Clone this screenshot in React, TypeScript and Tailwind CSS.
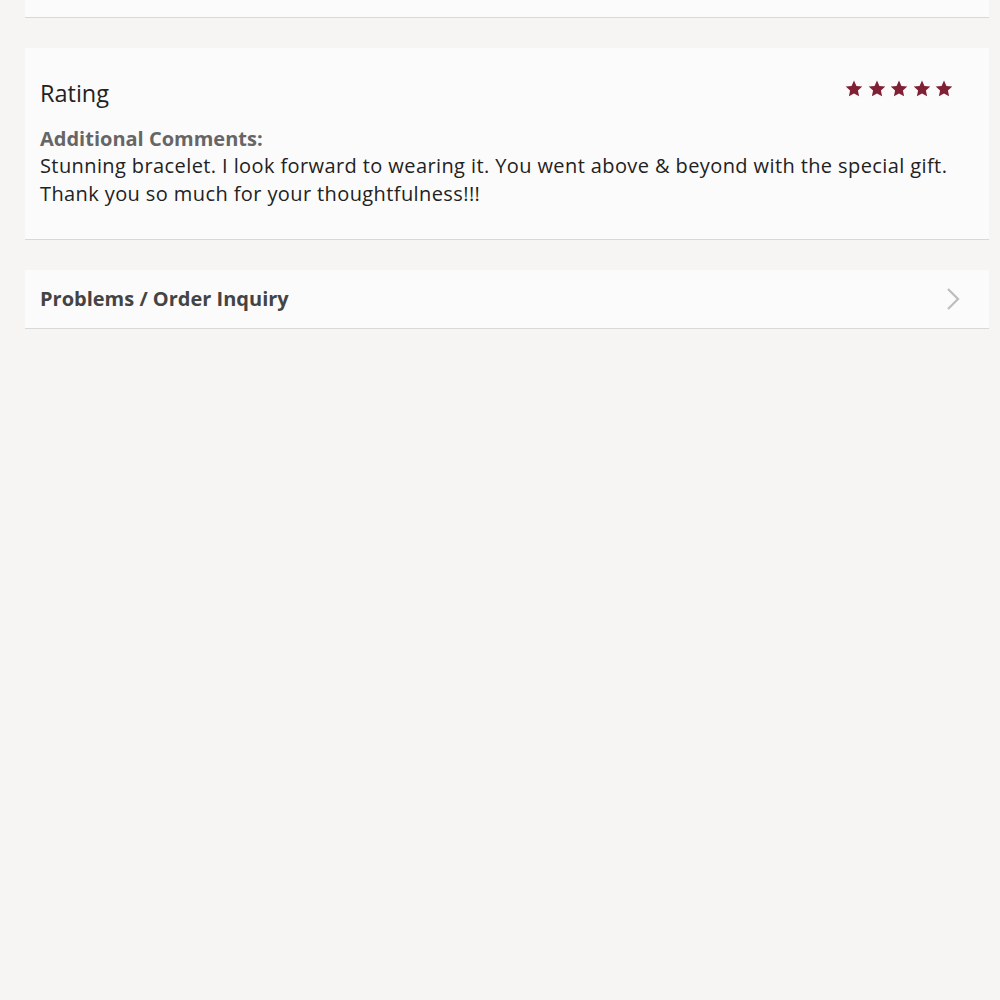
import React from "react";

const Star = () => (
  <svg width="18" height="17" viewBox="0 0 24 23" className="block">
    <path
      d="M12 0.8l3.3 7.2 7.9 0.9-5.9 5.4 1.6 7.8L12 18.2l-6.9 3.9 1.6-7.8L0.8 8.9l7.9-0.9z"
      fill="#7f2035"
    />
  </svg>
);

export default function App() {
  return (
    <div
      className="min-h-[1000px] w-[1000px] bg-[#f6f5f3] pl-[25px] pr-[11px]"
      style={{ fontFamily: "'Open Sans', Lato, sans-serif" }}
    >
      <div className="h-[18px] bg-[#fcfbfb] border-b border-[#d8d8d8]" />
      <div className="mt-[30px] bg-[#fcfbfb] border-b border-[#d8d8d8] px-[15px] pt-[30px] pb-[31px]">
        <div className="flex items-start justify-between">
          <div className="text-[23.5px] leading-[31px] text-[#222]">Rating</div>
          <div className="flex gap-[4.5px] pr-[21px] pt-[1.5px]">
            <Star />
            <Star />
            <Star />
            <Star />
            <Star />
          </div>
        </div>
        <div className="mt-[16px] text-[20px] leading-[28px] font-bold text-[#666]">
          Additional Comments:
        </div>
        <div className="-mt-[1px] text-[20px] leading-[28px] tracking-[0.4px] text-[#222]">
          Stunning bracelet. I look forward to wearing it. You went above &amp; beyond with the special gift.
          <br />
          Thank you so much for your thoughtfulness!!!
        </div>
      </div>
      <div className="mt-[30px] h-[59px] bg-[#fcfbfb] border-b border-[#d8d8d8] px-[15px] flex items-center justify-between">
        <div className="-mt-[1px] text-[20px] font-bold text-[#444]">Problems / Order Inquiry</div>
        <svg width="15" height="24" viewBox="0 0 15 24" className="mr-[13px] -mt-[1px]">
          <path d="M2 2l10 10-10 10" fill="none" stroke="#bdbdbd" strokeWidth="2.2" />
        </svg>
      </div>
    </div>
  );
}
